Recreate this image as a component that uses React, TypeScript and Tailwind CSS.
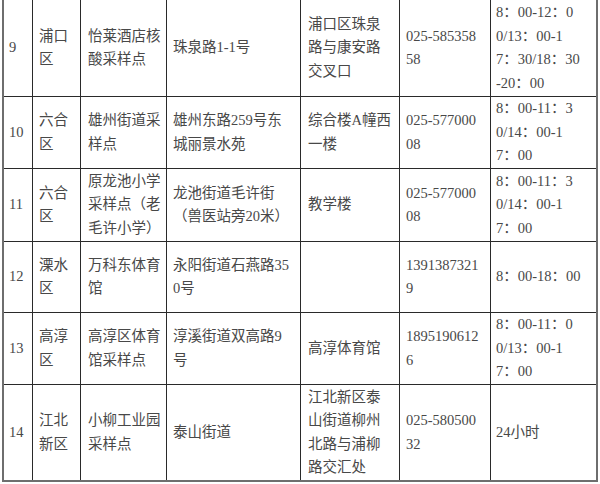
import React from 'react';

type Row = {
  no: string;
  district: string[];
  site: string[];
  address: string[];
  place: string[];
  phone: string[];
  hours: string[];
};

const rows: Row[] = [
  {
    no: '9',
    district: ['浦口', '区'],
    site: ['怡莱酒店核', '酸采样点'],
    address: ['珠泉路1-1号'],
    place: ['浦口区珠泉', '路与康安路', '交叉口'],
    phone: ['025-585358', '58'],
    hours: ['8：00-12：0', '0/13：00-1', '7：30/18：30', '-20：00'],
  },
  {
    no: '10',
    district: ['六合', '区'],
    site: ['雄州街道采', '样点'],
    address: ['雄州东路259号东', '城丽景水苑'],
    place: ['综合楼A幢西', '一楼'],
    phone: ['025-577000', '08'],
    hours: ['8：00-11：3', '0/14：00-1', '7：00'],
  },
  {
    no: '11',
    district: ['六合', '区'],
    site: ['原龙池小学', '采样点（老', '毛许小学）'],
    address: ['龙池街道毛许街', '（兽医站旁20米）'],
    place: ['教学楼'],
    phone: ['025-577000', '08'],
    hours: ['8：00-11：3', '0/14：00-1', '7：00'],
  },
  {
    no: '12',
    district: ['溧水', '区'],
    site: ['万科东体育', '馆'],
    address: ['永阳街道石燕路35', '0号'],
    place: [],
    phone: ['1391387321', '9'],
    hours: ['8：00-18：00'],
  },
  {
    no: '13',
    district: ['高淳', '区'],
    site: ['高淳区体育', '馆采样点'],
    address: ['淳溪街道双高路9', '号'],
    place: ['高淳体育馆'],
    phone: ['1895190612', '6'],
    hours: ['8：00-11：0', '0/13：00-1', '7：00'],
  },
  {
    no: '14',
    district: ['江北', '新区'],
    site: ['小柳工业园', '采样点'],
    address: ['泰山街道'],
    place: ['江北新区泰', '山街道柳州', '北路与浦柳', '路交汇处'],
    phone: ['025-580500', '32'],
    hours: ['24小时'],
  },
];

const Cell: React.FC<{ lines: string[]; className?: string }> = ({ lines, className = 'px-[6px]' }) => (
  <div className={`bg-white flex flex-col justify-center whitespace-nowrap ${className}`}>
    {lines.map((l, i) => (
      <div key={i}>{l}</div>
    ))}
  </div>
);

export default function App() {
  return (
    <div className="w-[600px] h-[484px] bg-white overflow-hidden">
      <div className="ml-[2px] -mt-[2px] w-[596px] border-2 border-[#6e6e6e] bg-[#2a2a2a]">
        <div className="grid grid-cols-[28px_47px_85px_133px_98px_90px_105px] grid-rows-[96px_71px_72px_70px_71px_95px] gap-px font-['Liberation_Serif','Noto_Sans_CJK_SC',serif] text-[14.5px] leading-[23.5px] text-[#484848]">
          {rows.map((r) => (
            <React.Fragment key={r.no}>
              <Cell lines={[r.no]} className="pl-[5px]" />
              <Cell lines={r.district} />
              <Cell lines={r.site} className="px-[7px]" />
              <Cell lines={r.address} />
              <Cell lines={r.place} className="px-[7px]" />
              <Cell lines={r.phone} />
              <Cell lines={r.hours} className="px-[5px]" />
            </React.Fragment>
          ))}
        </div>
      </div>
    </div>
  );
}
